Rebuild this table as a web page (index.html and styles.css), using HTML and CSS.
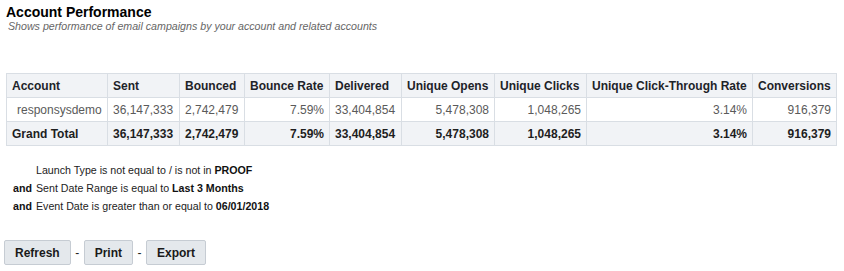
FILE: index.html
```html
<!DOCTYPE html>
<html>
<head>
<meta charset="utf-8">
<link rel="stylesheet" href="styles.css">
</head>
<body>
<div class="page">
  <div class="title">Account Performance</div>
  <div class="subtitle">Shows performance of email campaigns by your account and related accounts</div>

  <table class="report">
    <colgroup>
      <col style="width:101px"><col style="width:72px"><col style="width:65px"><col style="width:85px"><col style="width:72px"><col style="width:93px"><col style="width:92px"><col style="width:166px"><col style="width:84px">
    </colgroup>
    <thead>
      <tr>
        <th>Account</th><th>Sent</th><th>Bounced</th><th>Bounce Rate</th><th>Delivered</th><th>Unique Opens</th><th>Unique Clicks</th><th>Unique Click-Through Rate</th><th>Conversions</th>
      </tr>
    </thead>
    <tbody>
      <tr class="data">
        <td class="acct">responsysdemo</td><td>36,147,333</td><td>2,742,479</td><td class="num">7.59%</td><td>33,404,854</td><td class="num">5,478,308</td><td class="num">1,048,265</td><td class="num">3.14%</td><td class="num">916,379</td>
      </tr>
      <tr class="total">
        <td>Grand Total</td><td>36,147,333</td><td>2,742,479</td><td class="num">7.59%</td><td>33,404,854</td><td class="num">5,478,308</td><td class="num">1,048,265</td><td class="num">3.14%</td><td class="num">916,379</td>
      </tr>
    </tbody>
  </table>

  <div class="filters">
    <span class="conj"></span><span class="cond">Launch Type is not equal to / is not in <b>PROOF</b></span>
    <span class="conj">and</span><span class="cond">Sent Date Range is equal to <b>Last 3 Months</b></span>
    <span class="conj">and</span><span class="cond">Event Date is greater than or equal to <b>06/01/2018</b></span>
  </div>

  <div class="actions">
    <button class="btn">Refresh</button><span class="sep">-</span><button class="btn">Print</button><span class="sep">-</span><button class="btn">Export</button>
  </div>
</div>
</body>
</html>
```

FILE: styles.css
```css
html, body {
  margin: 0;
  padding: 0;
  background: #ffffff;
  font-family: "Liberation Sans", Arial, sans-serif;
  color: #222222;
}

.page {
  padding: 4px 0 0 0;
}

.title {
  margin-left: 6px;
  font-size: 14px;
  font-weight: bold;
  line-height: 16px;
  color: #000000;
}

.subtitle {
  margin-left: 8px;
  font-size: 10.65px;
  font-style: italic;
  line-height: 13px;
  color: #666666;
}

.report {
  margin: 40px 0 0 6px;
  border-collapse: collapse;
  table-layout: fixed;
  width: 830px;
  font-size: 12px;
}

.report th,
.report td {
  border: 1px solid #d9dee4;
  height: 23px;
  padding: 0 5px;
  line-height: 14px;
  white-space: nowrap;
  overflow: hidden;
}

.report th {
  background: #f1f3f6;
  text-align: left;
  font-weight: bold;
  color: #1e2329;
}

.report tr.data td {
  background: #ffffff;
  color: #5a5a5a;
  text-align: left;
}

.report tr.data td.acct {
  padding-left: 10px;
}

.report tr.total td {
  background: #f1f3f6;
  font-weight: bold;
  color: #1e1e1e;
  text-align: left;
}

.report td.num {
  text-align: right !important;
}

.filters {
  margin: 17px 0 0 13px;
  display: grid;
  grid-template-columns: 23px auto;
  row-gap: 4px;
  font-size: 10.65px;
  line-height: 14px;
  color: #222222;
}

.filters .conj {
  font-weight: bold;
  color: #111111;
}

.filters b {
  color: #111111;
}

.actions {
  margin: 27px 0 0 4px;
  display: flex;
  align-items: center;
}

.btn {
  font-family: "Liberation Sans", Arial, sans-serif;
  font-size: 12px;
  font-weight: bold;
  color: #1a1a1a;
  background: #e4e8ec;
  border: 1px solid #c6ccd3;
  border-radius: 2px;
  height: 25px;
  padding: 0 10px;
  margin: 0;
}

.sep {
  width: 13px;
  text-align: center;
  font-size: 12px;
  color: #222222;
}
```
